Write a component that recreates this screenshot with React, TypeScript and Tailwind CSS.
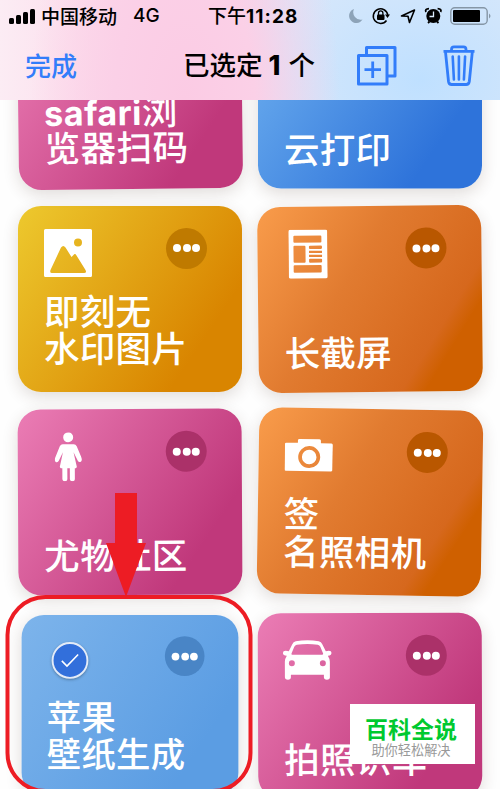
import type { ReactNode } from 'react';

type CardProps = {
  tone: string;
  tilt?: string;
  icon?: ReactNode;
  lines: ReactNode[];
  dots?: string;
  shift?: string;
};

function Card({ tone, tilt = '', icon, lines, dots = 'bg-[#b95700]', shift = '' }: CardProps) {
  return (
    <article
      className={`flex h-[186px] w-[224px] flex-col justify-between rounded-[23px] pt-[22px] pr-[35px] pl-[26px] shadow-[0_5px_16px_rgba(70,45,30,0.16)] ${lines.length > 1 ? 'pb-[26px]' : 'pb-[23px]'} ${tone} ${tilt}`}
    >
      <div className="flex h-[49px] items-start justify-between">
        <div className="pt-px">{icon}</div>
        <div className={`flex h-[41px] w-[41px] items-center justify-center gap-[1.400px] rounded-full ${dots}`}>
          <i className="h-[8px] w-[8px] rounded-full bg-white" />
          <i className="h-[8px] w-[8px] rounded-full bg-white" />
          <i className="h-[8px] w-[8px] rounded-full bg-white" />
        </div>
      </div>
      <h2 className={`text-[35.5px] leading-[37.500px] font-medium tracking-[0.3px] whitespace-nowrap text-white ${shift}`}>
        {lines.map((line, index) => (
          <span key={index} className="block h-[37.500px]">
            {line}
          </span>
        ))}
      </h2>
    </article>
  );
}

const PhotoIcon = () => (
  <svg width="48" height="48" viewBox="0 0 48 48" fill="white">
    <path
      fillRule="evenodd"
      d="M1.5 0h45Q48 0 48 1.5v45q0 1.500-1.500 1.500h-45Q0 48 0 46.500v-45Q0 0 1.500 0ZM34 9.500a4 4 0 1 0 0 8 4 4 0 0 0 0-8ZM17 18.500 6.500 41q-1 3 1.500 3h32q3 0 1.500-3L32.500 26.500q-1.500-2.500-3-.500L27.500 28 21.500 18.500q-2.200-3-4.500 0Z"
    />
  </svg>
);

const PaperIcon = () => (
  <svg width="39" height="49" viewBox="0 0 39 49" fill="white" className="ml-[5px]">
    <path
      fillRule="evenodd"
      d="M2 0h35q2 0 2 2v45q0 2-2 2H2q-2 0-2-2V2Q0 0 2 0ZM6 6q-1 0-1 1v5q0 1 1 1h26q1 0 1-1V7q0-1-1-1ZM6 16q-1 0-1 1v15q0 1 1 1h10q1 0 1-1V17q0-1-1-1ZM21.500 16q-1 0-1 1v1.600q0 .8 1 .8h11q1 0 1-.8v-1.600q0-1-1-1ZM20.500 21.200v2.200h13v-2.200ZM20.500 25.200v2.200h13v-2.200ZM21.500 29.200q-1 0-1 .8v2q0 1 1 1h11q1 0 1-1v-2q0-.8-1-.8ZM6 35.500q-1 0-1 1V42q0 1 1 1h26q1 0 1-1v-5.500q0-1-1-1Z"
    />
  </svg>
);

const WomanIcon = () => (
  <svg width="27" height="49" viewBox="0 0 27 49" fill="white" className="ml-[10.500px]">
    <circle cx="13.500" cy="5" r="5" />
    <path d="M8 12h11q2 0 3 2l5 12q.8 2.500-1 3.500-2 .8-3-1L18.800 20 22 34.500q0 1-1 1.500h-1v11q0 2-2.500 2T15 47V36h-2.500v11q0 2-2.500 2t-2.500-2V36H6q-1-.500-1-1.500L8.200 20 4 28.500q-1 1.800-3 1-1.700-1-.9-3.500l5-12q1-2 2.900-2Z" />
  </svg>
);

const CameraIcon = () => (
  <svg width="48" height="49" viewBox="0 0 48 49" fill="white">
    <path
      fillRule="evenodd"
      d="M14.500 8h20q1.500 0 1.500 1.500V12h10.500q1.500 0 1.500 1.500v25q0 1.500-1.500 1.500h-45Q0 40 0 38.500v-25Q0 12 1.500 12H13V9.500Q13 8 14.500 8ZM24.500 15a11 11 0 1 0 0 22 11 11 0 0 0 0-22Z"
    />
    <circle cx="24.500" cy="26" r="7.300" />
  </svg>
);

const CarIcon = () => (
  <svg width="49" height="49" viewBox="0 0 49 49" fill="white" className="-ml-px">
    <path
      fillRule="evenodd"
      d="M13 5q11.500-2 23 0 2.500.700 3.500 3l3.500 7q3.500-1 5 0 1.500 2 0 3.500-1 1-3 1 2 3 2 6v15.500q0 2.500-3 2.500t-3-2.500v-2.500H8v2.500q0 2.500-3 2.500T2 41V25.500q0-3 2-6-2 0-3.200-1-1.300-1.500 0-3.500 1.700-1 5.200 0l3.500-7q1-2.300 3.500-3ZM14 8.500q-1.800.300-2.500 2L8.800 17q-.5 1.500 1 1.500h29.400q1.500 0 1-1.500L37.500 10.500q-.7-1.700-2.500-2-10.500-1.500-21 0ZM9 24a3 3 0 1 0 0 6 3 3 0 0 0 0-6ZM40 24a3 3 0 1 0 0 6 3 3 0 0 0 0-6Z"
    />
  </svg>
);

const CheckBadge = () => (
  <div className="mt-[5px] ml-[5px] flex h-[38px] w-[38px] items-center justify-center rounded-full border-2 border-[#e3ebf8] bg-[#326fdb] shadow-[0_1px_3px_rgba(0,0,0,0.3)]">
    <svg width="20" height="16" viewBox="0 0 22 18" fill="none" stroke="white" strokeWidth="1.800">
      <path d="M1.500 9.500 7.500 15.500 20.500 2" />
    </svg>
  </div>
);

const PINK = 'bg-[linear-gradient(124deg,#eb7db5_0%,#c0387b_79%,#c0387b_100%)]';
const ORANGE = 'bg-[linear-gradient(122deg,#f99c4b_0%,#e17b30_40%,#d6681d_76%,#cf6000_83%,#cf6000_100%)]';

function StatusBar() {
  return (
    <div className="flex h-8 items-center text-[19px] leading-8 font-medium">
      <div className="flex w-[208px] items-center pl-[9px]">
        <div className="mr-[6px] flex h-[16px] items-end gap-[2px]">
          <i className="h-[6px] w-[5px] rounded-[1.500px] bg-black" />
          <i className="h-[9px] w-[5px] rounded-[1.500px] bg-black" />
          <i className="h-[12px] w-[5px] rounded-[1.500px] bg-black" />
          <i className="h-[15px] w-[5px] rounded-[1.500px] bg-black" />
        </div>
        <span className="-mt-px w-[92px] whitespace-nowrap">中国移动</span>
        <span className="font-['Inter'] text-[19px] font-medium">4G</span>
      </div>
      <div className="-mt-px w-[140px] whitespace-nowrap">
        <span className="text-[19px]">下午</span>
        <span className="font-['Inter'] text-[19px] font-bold tracking-[1.1px]">11:28</span>
      </div>
      <svg width="152" height="32" viewBox="348 0 152 32" fill="none">
        <path d="M354 9a7.200 7.200 0 1 0 8.500 10.500A7.500 7.500 0 0 1 354 9Z" fill="#8da3b8" />
        <path d="M386.500 20.500A7.300 7.300 0 1 1 387.800 15" stroke="black" strokeWidth="1.500" />
        <path d="m385 14.500 5 0-2.500 3.500Z" fill="black" />
        <rect x="377" y="14.500" width="7.500" height="5.500" rx="1" fill="black" />
        <path d="M378.500 15v-2a2.200 2.200 0 0 1 4.400 0v2" stroke="black" strokeWidth="1.300" />
        <path d="m401.500 16 13-6-5 12.500-1.500-6.300Z" stroke="black" strokeWidth="1.600" strokeLinejoin="round" />
        <circle cx="433.300" cy="16" r="7" fill="black" />
        <path d="M426 12q-1.500-3 3-3.300M440.600 12q1.500-3-3-3.300M429.500 21.500l-1.500 1.500M437 21.500l1.500 1.500" stroke="black" strokeWidth="1.800" />
        <path d="M433.500 11.500v5h-4" stroke="#dcecfc" strokeWidth="1.300" />
        <rect x="450.800" y="7.800" width="36.400" height="16.500" rx="4" stroke="#8596a6" strokeWidth="1.400" />
        <rect x="453" y="10" width="27" height="12" rx="1" fill="black" />
        <path d="M489 13.500q3 2.500 0 5Z" fill="#8596a6" />
      </svg>
    </div>
  );
}

function NavBar() {
  return (
    <div className="flex h-[68px] items-center">
      <button className="-mt-[3px] w-[183px] pl-[25px] text-left text-[26px] font-medium text-[#327dfa]">完成</button>
      <h1 className="-mt-px w-[174px] text-[26.5px] font-medium whitespace-nowrap text-black">
        已选定 <span className="font-['Inter'] text-[27px] font-extrabold">1</span>
        <span className="ml-[8px]">个</span>
      </h1>
      <svg width="143" height="68" viewBox="357 32 143 68" fill="none" stroke="#327dfa" strokeWidth="3" strokeLinejoin="round">
        <path d="M366.500 54v-6.500h28.500v28.500h-7" />
        <rect x="358.500" y="55.500" width="28.500" height="28.500" />
        <path d="M364.500 69.700h16.500M372.700 61.500v16.500" strokeWidth="2.800" />
        <path d="M443.500 51.300h31M451.500 51v-1.500q0-2.700 2.500-2.700h9.500q2.500 0 2.500 2.700V51" strokeWidth="2.800" />
        <path d="m445.500 52 3 29.500q.4 3 3.200 3h14.400q2.800 0 3.200-3L472.300 52" strokeWidth="2.800" />
        <path d="m452.700 56.500 1.200 23M458.900 56.500v23M465.100 56.500l-1.200 23" strokeWidth="2.600" strokeLinecap="round" />
      </svg>
    </div>
  );
}

export default function App() {
  return (
    <div className="relative h-[789px] w-[500px] overflow-hidden bg-[#fefefe] font-['Noto_Sans_CJK_SC',sans-serif] text-black">
      <header className="h-[100px] bg-[radial-gradient(ellipse_155px_300px_at_185px_100px,#fbcbe4_0%,#fbd0e7_45%,rgba(251,215,235,0)_100%),radial-gradient(ellipse_210px_160px_at_420px_80px,#bfe0ff_0%,#cfe5fc_50%,rgba(218,233,251,0)_100%),linear-gradient(90deg,#fcecf4_0%,#fbd8e9_25%,#fad3e8_42%,#e2dff2_50%,#dce9fa_58%,#dce9fb_100%)]">
        <StatusBar />
        <NavBar />
      </header>
      <main className="h-[689px] overflow-hidden">
        <div className="-mt-[98px] ml-[18px] grid w-[464px] grid-cols-[224px_224px] gap-x-[16px] gap-y-[17.500px]">
          <Card
            tone={PINK}
            tilt="rotate-[-0.7deg] translate-y-px"
            dots="bg-[#a92e6a]"
            lines={[
              <span className="inline-block h-[37.500px] translate-y-[2px]">
                <span className="font-['Inter'] text-[34px] font-bold">safari</span>浏
              </span>,
              '览器扫码',
            ]}
            shift="translate-y-px tracking-[0.5px]"
          />
          <Card tone="bg-[linear-gradient(124deg,#70b2f0_0%,#2e73da_79%,#2e73da_100%)]" tilt="translate-y-[0.5px]" dots="bg-[#245fb8]" lines={['云打印']} />
          <Card tone="bg-[linear-gradient(124deg,#edc92e_0%,#d98500_79%,#d98500_100%)]" dots="bg-[#bf7a00]" icon={<PhotoIcon />} lines={['即刻无', '水印图片']} />
          <Card tone={ORANGE} tilt="rotate-[-0.6deg]" icon={<PaperIcon />} lines={['长截屏']} />
          <Card tone={PINK} tilt="rotate-[-0.3deg]" dots="bg-[#ab3169]" icon={<WomanIcon />} lines={['尤物社区']} />
          <Card tone={ORANGE} tilt="rotate-[0.9deg]" icon={<CameraIcon />} lines={['签', '名照相机']} />
          <Card
            tone="bg-[linear-gradient(124deg,#7db4eb_0%,#5b9de3_79%,#5b9de3_100%)]"
            tilt="scale-[0.968] -translate-y-px"
            dots="bg-[#4985c6]"
            icon={<CheckBadge />}
            lines={['苹果', '壁纸生成']}
          />
          <Card tone={PINK} tilt="rotate-[-0.2deg]" dots="bg-[#ab3169]" icon={<CarIcon />} lines={['拍照识车']} />
        </div>
      </main>

      <svg className="absolute top-0 left-0" width="500" height="789" viewBox="0 0 500 789" fill="none">
        <rect x="7.500" y="597" width="243" height="194" rx="38" stroke="#ed1c24" strokeWidth="4" />
        <path d="M115 493h22v50h9l-20 54-20-54h9Z" fill="#ed1c24" />
      </svg>

      <aside className="absolute top-[704px] left-[350px] flex h-[60px] w-[125px] flex-col items-center bg-white pt-[9px]">
        <strong className="mr-[3px] text-[23px] leading-[30px] font-bold text-[#00c92f]">百科全说</strong>
        <span className="mr-[3px] text-[13.2px] leading-[14px] text-[#999]">助你轻松解决</span>
      </aside>
    </div>
  );
}
